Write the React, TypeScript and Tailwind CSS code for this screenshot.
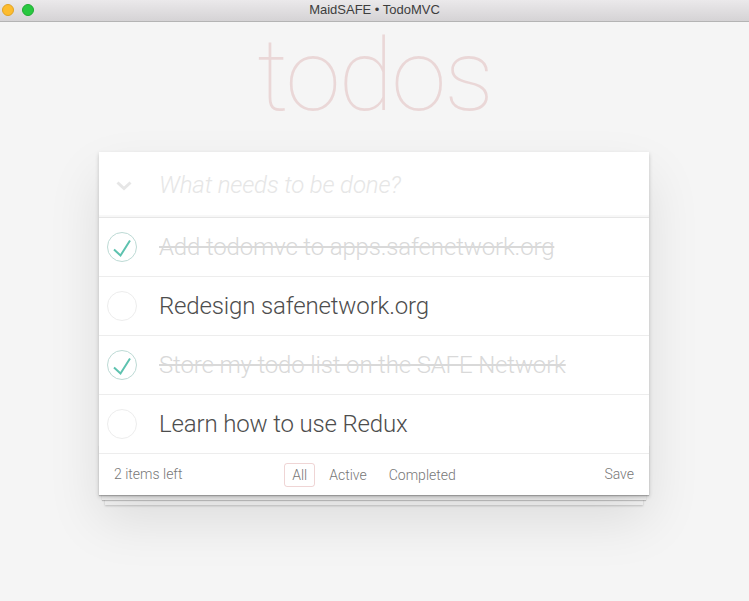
import React from "react";

const todos = [
  { text: "Add todomvc to apps.safenetwork.org", done: true },
  { text: "Redesign safenetwork.org", done: false },
  { text: "Store my todo list on the SAFE Network", done: true },
  { text: "Learn how to use Redux", done: false },
];

function Check({ done }: { done: boolean }) {
  return (
    <svg width="40" height="40" viewBox="0 0 40 40" className="shrink-0">
      <circle cx="20" cy="20" r="14.5" fill="none" stroke={done ? "#bddad5" : "#ededed"} strokeWidth="1" />
      {done && (
        <polyline points="12,22.5 18.5,28.5 28,13.5" fill="none" stroke="#5dc2af" strokeWidth="2" />
      )}
    </svg>
  );
}

export default function App() {
  return (
    <div
      className="w-[749px] h-[601px] bg-[#f5f5f5] flex flex-col overflow-hidden"
      style={{ fontFamily: "Roboto, 'Helvetica Neue', Arial, sans-serif" }}
    >
      <div className="h-[22px] shrink-0 bg-gradient-to-b from-[#ebe9eb] to-[#d5d3d5] border-b border-[#b4b4b4] flex items-start relative">
        <div className="absolute left-[2px] top-[4px] w-[12px] h-[12px] rounded-full bg-[#fdbc2e] border border-[#e0a324]" />
        <div className="absolute left-[22px] top-[4px] w-[12px] h-[12px] rounded-full bg-[#28c840] border border-[#1faa32]" />
        <div className="w-full text-center text-[13px] text-[#3d3d3d] leading-[15px] pt-[2px]" style={{ fontFamily: "'Liberation Sans', Arial, sans-serif" }}>
          MaidSAFE • TodoMVC
        </div>
      </div>

      <div className="h-[130px] shrink-0 flex justify-center">
        <h1 className="text-[100px] font-thin leading-none text-[rgba(175,47,47,0.15)] mt-[4px] tracking-[-2px]">
          todos
        </h1>
      </div>

      <div className="ml-[99px] w-[550px] relative">
        <div className="bg-white shadow-[0_2px_4px_0_rgba(0,0,0,0.2),0_25px_50px_0_rgba(0,0,0,0.1)] relative z-10">
          <div className="h-[65px] flex items-center shadow-[inset_0_-2px_1px_rgba(0,0,0,0.03)]">
            <div className="w-[60px] flex justify-center">
              <svg width="16" height="10" viewBox="0 0 16 10" className="ml-[-11px] mt-[2px]">
                <polyline points="1.5,1.5 8,7.5 14.5,1.5" fill="none" stroke="#e6e6e6" strokeWidth="3" />
              </svg>
            </div>
            <div className="text-[24px] italic font-light text-[#e6e6e6] tracking-[-0.15px]">What needs to be done?</div>
          </div>
          <ul className="border-t border-[#e6e6e6]">
            {todos.map((t, i) => (
              <li key={i} className="h-[59px] flex items-center border-b border-[#ededed]">
                <div className="w-[45px] flex justify-center">
                  <Check done={t.done} />
                </div>
                <div
                  className={
                    "ml-[15px] text-[24px] font-light leading-[1.2] tracking-[-0.15px] " +
                    (t.done ? "text-[#d9d9d9] line-through" : "text-[#4d4d4d]")
                  }
                >
                  {t.text}
                </div>
              </li>
            ))}
          </ul>
          <div className="h-[41px] px-[15px] flex items-center text-[14px] font-light text-[#777] relative">
            <span>2 items left</span>
            <div className="absolute left-0 right-0 flex justify-center gap-[6px]">
              <span className="px-[7px] py-[3px] rounded-[3px] border border-[rgba(175,47,47,0.2)] leading-[16px]">All</span>
              <span className="px-[7px] py-[3px] rounded-[3px] border border-transparent leading-[16px]">Active</span>
              <span className="px-[7px] py-[3px] rounded-[3px] border border-transparent leading-[16px]">Completed</span>
            </div>
            <span className="ml-auto">Save</span>
          </div>
        </div>
        <div className="absolute left-0 right-0 bottom-0 h-[50px] shadow-[0_1px_1px_rgba(0,0,0,0.2),0_8px_0_-3px_#f6f6f6,0_9px_1px_-3px_rgba(0,0,0,0.2),0_16px_0_-6px_#f6f6f6,0_17px_2px_-6px_rgba(0,0,0,0.2)]" />
      </div>
    </div>
  );
}
